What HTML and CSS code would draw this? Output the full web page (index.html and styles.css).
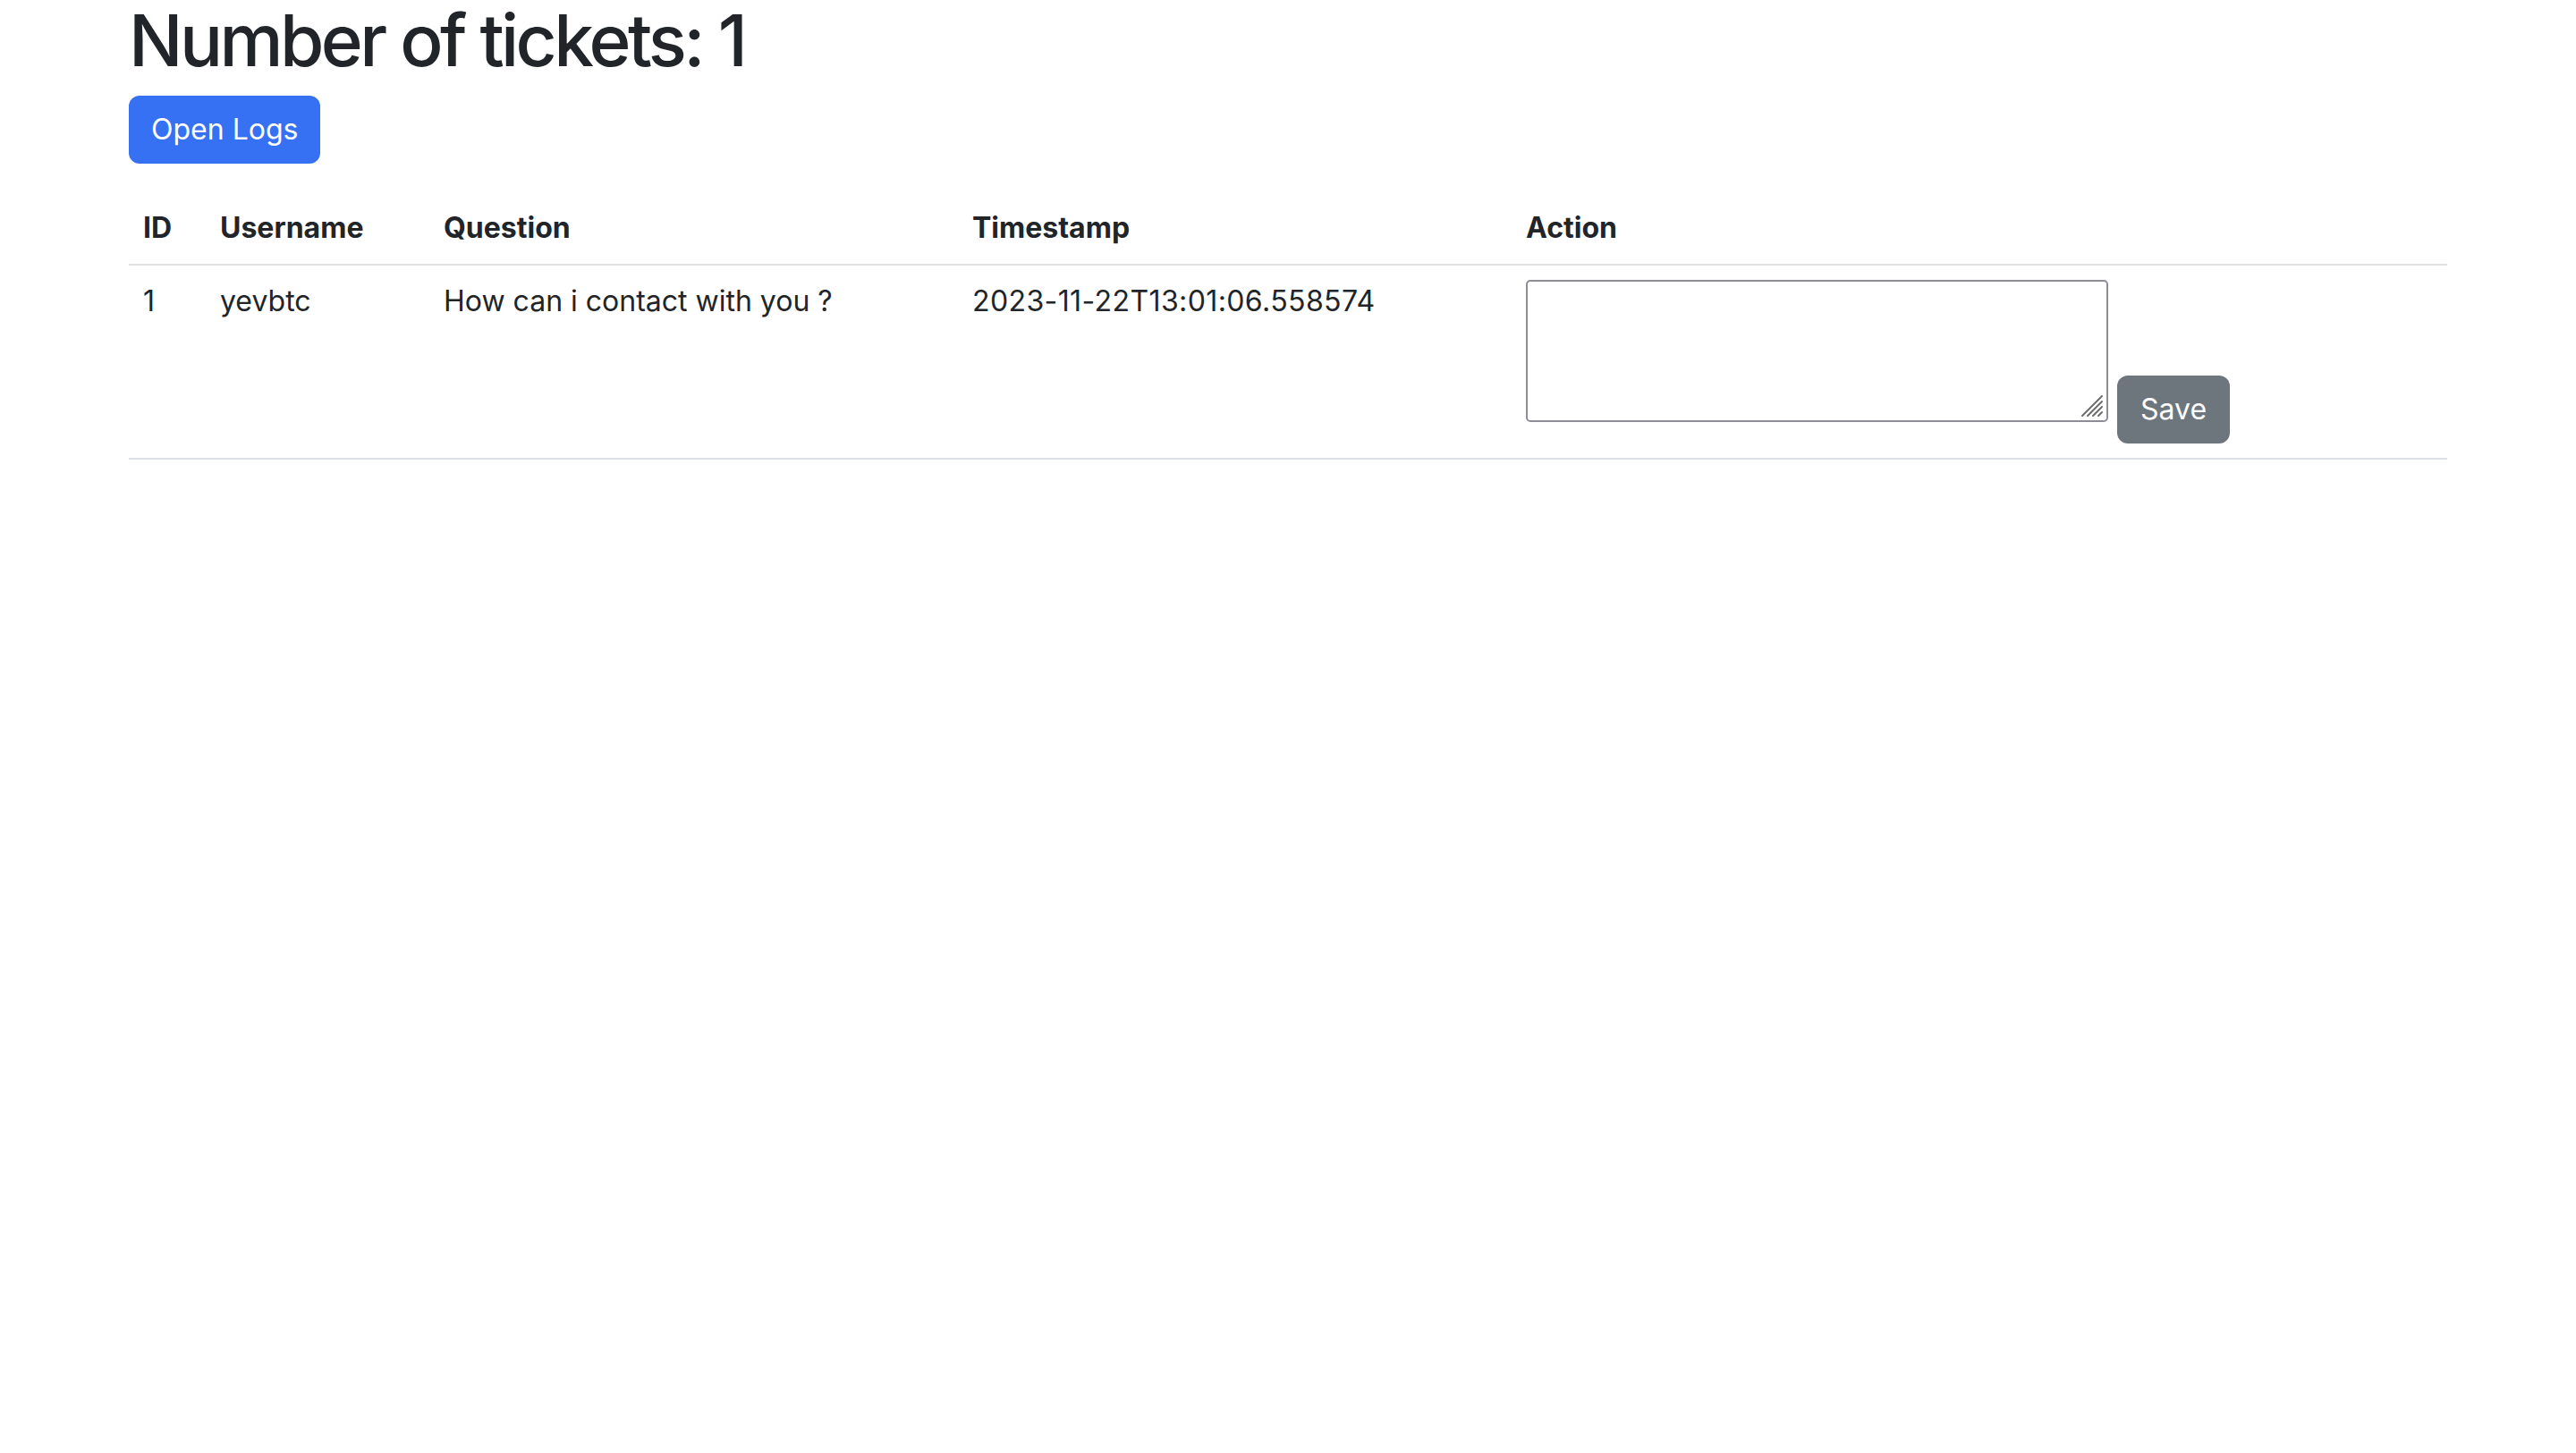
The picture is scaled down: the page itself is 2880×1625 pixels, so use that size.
FILE: index.html
```html
<!DOCTYPE html>
<html lang="en">
<head>
<meta charset="utf-8">
<title>Tickets</title>
<link rel="stylesheet" href="styles.css">
</head>
<body>
<div class="container">
  <h1 class="title">Number of tickets: 1</h1>
  <button class="btn btn-primary" type="button">Open Logs</button>
  <table class="table">
    <thead>
      <tr>
        <th class="col-id">ID</th>
        <th class="col-user">Username</th>
        <th class="col-question">Question</th>
        <th class="col-time">Timestamp</th>
        <th class="col-action">Action</th>
      </tr>
    </thead>
    <tbody>
      <tr>
        <td>1</td>
        <td>yevbtc</td>
        <td>How can i contact with you ?</td>
        <td class="stamp">2023-11-22T13:01:06.558574</td>
        <td>
          <form class="action-form">
            <div class="answer-wrap">
              <textarea class="answer"></textarea>
              <svg class="grip" width="26" height="26" viewBox="0 0 26 26" aria-hidden="true">
                <g stroke="#6b6b6b" stroke-width="2" stroke-linecap="round">
                  <line x1="2" y1="24" x2="24" y2="2"/>
                  <line x1="8" y1="24" x2="24" y2="8"/>
                  <line x1="14" y1="24" x2="24" y2="14"/>
                  <line x1="20" y1="24" x2="24" y2="20"/>
                </g>
              </svg>
            </div>
            <button class="btn btn-secondary" type="button">Save</button>
          </form>
        </td>
      </tr>
    </tbody>
  </table>
</div>
</body>
</html>
```

FILE: styles.css
```css
* { box-sizing: border-box; }

body {
  margin: 0;
  background: #fff;
  color: #212529;
  font-family: Inter, "Noto Sans", "Liberation Sans", sans-serif;
  font-size: 32px;
  line-height: 1.5;
}

.container {
  width: 2640px;
  margin: 0 auto;
  padding: 0 24px;
}

.title {
  margin: 0 0 17px 0;
  font-size: 80px;
  font-weight: 500;
  line-height: 90px;
  letter-spacing: -3.6px;
}

.btn {
  display: inline-block;
  height: 76px;
  padding: 0 25px;
  border: 0;
  border-radius: 12px;
  color: #fff;
  font-family: inherit;
  font-size: 32px;
  line-height: 76px;
}

.btn-primary { background: #3571f2; }
.btn-secondary {
  background: #6d757d;
  padding: 0 26px;
}

.table {
  width: 100%;
  margin-top: 32px;
  border-collapse: collapse;
}

.table th,
.table td {
  padding: 16px;
  text-align: left;
  vertical-align: top;
  border-bottom: 2px solid #dee2e6;
}

.table th { font-weight: 700; }

.stamp { letter-spacing: 0.4px; }

.col-id { width: 86px; }
.col-user { width: 250px; }
.col-question { width: 591px; }
.col-time { width: 619px; }

.action-form {
  display: flex;
  align-items: flex-end;
  gap: 10px;
  margin: 0;
}

.answer-wrap {
  position: relative;
  width: 651px;
  height: 159px;
  margin-bottom: 24px;
}

.answer {
  display: block;
  width: 100%;
  height: 100%;
  margin: 0;
  border: 2px solid #8f8c97;
  border-radius: 5px;
  font-family: inherit;
  font-size: 26px;
  resize: none;
}

.grip {
  position: absolute;
  right: 5px;
  bottom: 5px;
  pointer-events: none;
}
```
